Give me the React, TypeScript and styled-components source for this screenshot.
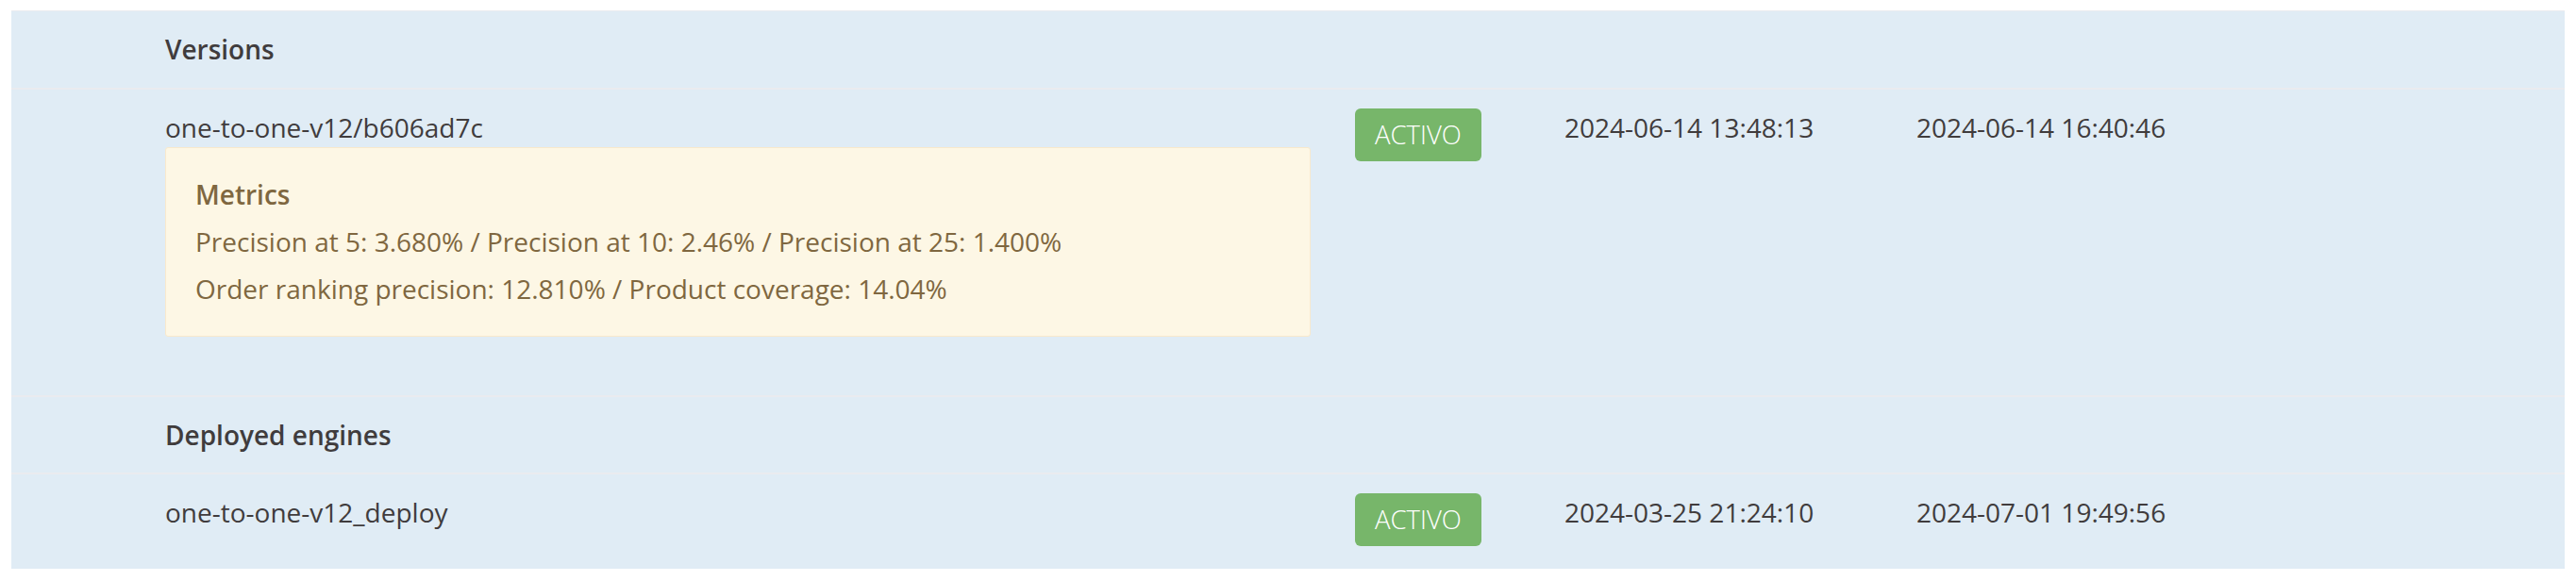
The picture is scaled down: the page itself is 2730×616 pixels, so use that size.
import React from "react";
import styled, { createGlobalStyle } from "styled-components";

const Global = createGlobalStyle`
  html, body { margin: 0; padding: 0; background: #ffffff; }
  body {
    font-family: "Open Sans", "Noto Sans", "Liberation Sans", sans-serif;
    font-size: 28px;
    line-height: 40px;
    color: #403c3d;
  }
`;

const Page = styled.div`
  padding: 11px 12px 13px;
`;

const Table = styled.div`
  background: #e0ecf5;
  border-top: 1px solid #eaebef;
  display: flex;
  flex-direction: column;
`;

const Row = styled.div<{ $padTop?: number; $padBottom?: number; $last?: boolean }>`
  display: grid;
  grid-template-columns: 163px 1261px 222px 373px 1fr;
  align-items: start;
  padding-top: ${(p) => p.$padTop ?? 20}px;
  padding-bottom: ${(p) => p.$padBottom ?? 20}px;
  border-bottom: ${(p) => (p.$last ? "none" : "2px solid #eaebef")};
`;

const Spacer = styled.div``;

const SectionTitle = styled.div`
  grid-column: 2 / -1;
  font-weight: 600;
  color: #403c3d;
`;

const NameCell = styled.div`
  padding-right: 47px;
  display: flex;
  flex-direction: column;
`;

const DateCell = styled.div`
  white-space: nowrap;
`;

const Badge = styled.span`
  display: inline-block;
  height: 56px;
  line-height: 56px;
  padding: 0 21px;
  border-radius: 6px;
  background: #77b66a;
  color: #ffffff;
  font-size: 27.5px;
  font-weight: 300;
`;

const BadgeCell = styled.div`
  display: flex;
`;

const Alert = styled.div`
  margin-top: 1px;
  margin-bottom: 62px;
  padding: 24px 31px 25px;
  background: #fdf7e5;
  border: 1px solid #f8e9cc;
  border-radius: 3px;
  color: #7f6740;
  line-height: 50px;
`;

const AlertTitle = styled.div`
  font-weight: 600;
`;

const AlertLine = styled.div``;

export default function App() {
  return (
    <>
      <Global />
      <Page>
        <Table>
          <Row $padTop={20} $padBottom={21}>
            <Spacer />
            <SectionTitle>Versions</SectionTitle>
          </Row>
          <Row $padBottom={0}>
            <Spacer />
            <NameCell>
              <span>one-to-one-v12/b606ad7c</span>
              <Alert>
                <AlertTitle>Metrics</AlertTitle>
                <AlertLine>
                  Precision at 5: 3.680% / Precision at 10: 2.46% / Precision at 25: 1.400%
                </AlertLine>
                <AlertLine>Order ranking precision: 12.810% / Product coverage: 14.04%</AlertLine>
              </Alert>
            </NameCell>
            <BadgeCell>
              <Badge>ACTIVO</Badge>
            </BadgeCell>
            <DateCell>2024-06-14 13:48:13</DateCell>
            <DateCell>2024-06-14 16:40:46</DateCell>
          </Row>
          <Row>
            <Spacer />
            <SectionTitle>Deployed engines</SectionTitle>
          </Row>
          <Row $padBottom={24} $last>
            <Spacer />
            <NameCell>
              <span>one-to-one-v12_deploy</span>
            </NameCell>
            <BadgeCell>
              <Badge>ACTIVO</Badge>
            </BadgeCell>
            <DateCell>2024-03-25 21:24:10</DateCell>
            <DateCell>2024-07-01 19:49:56</DateCell>
          </Row>
        </Table>
      </Page>
    </>
  );
}
